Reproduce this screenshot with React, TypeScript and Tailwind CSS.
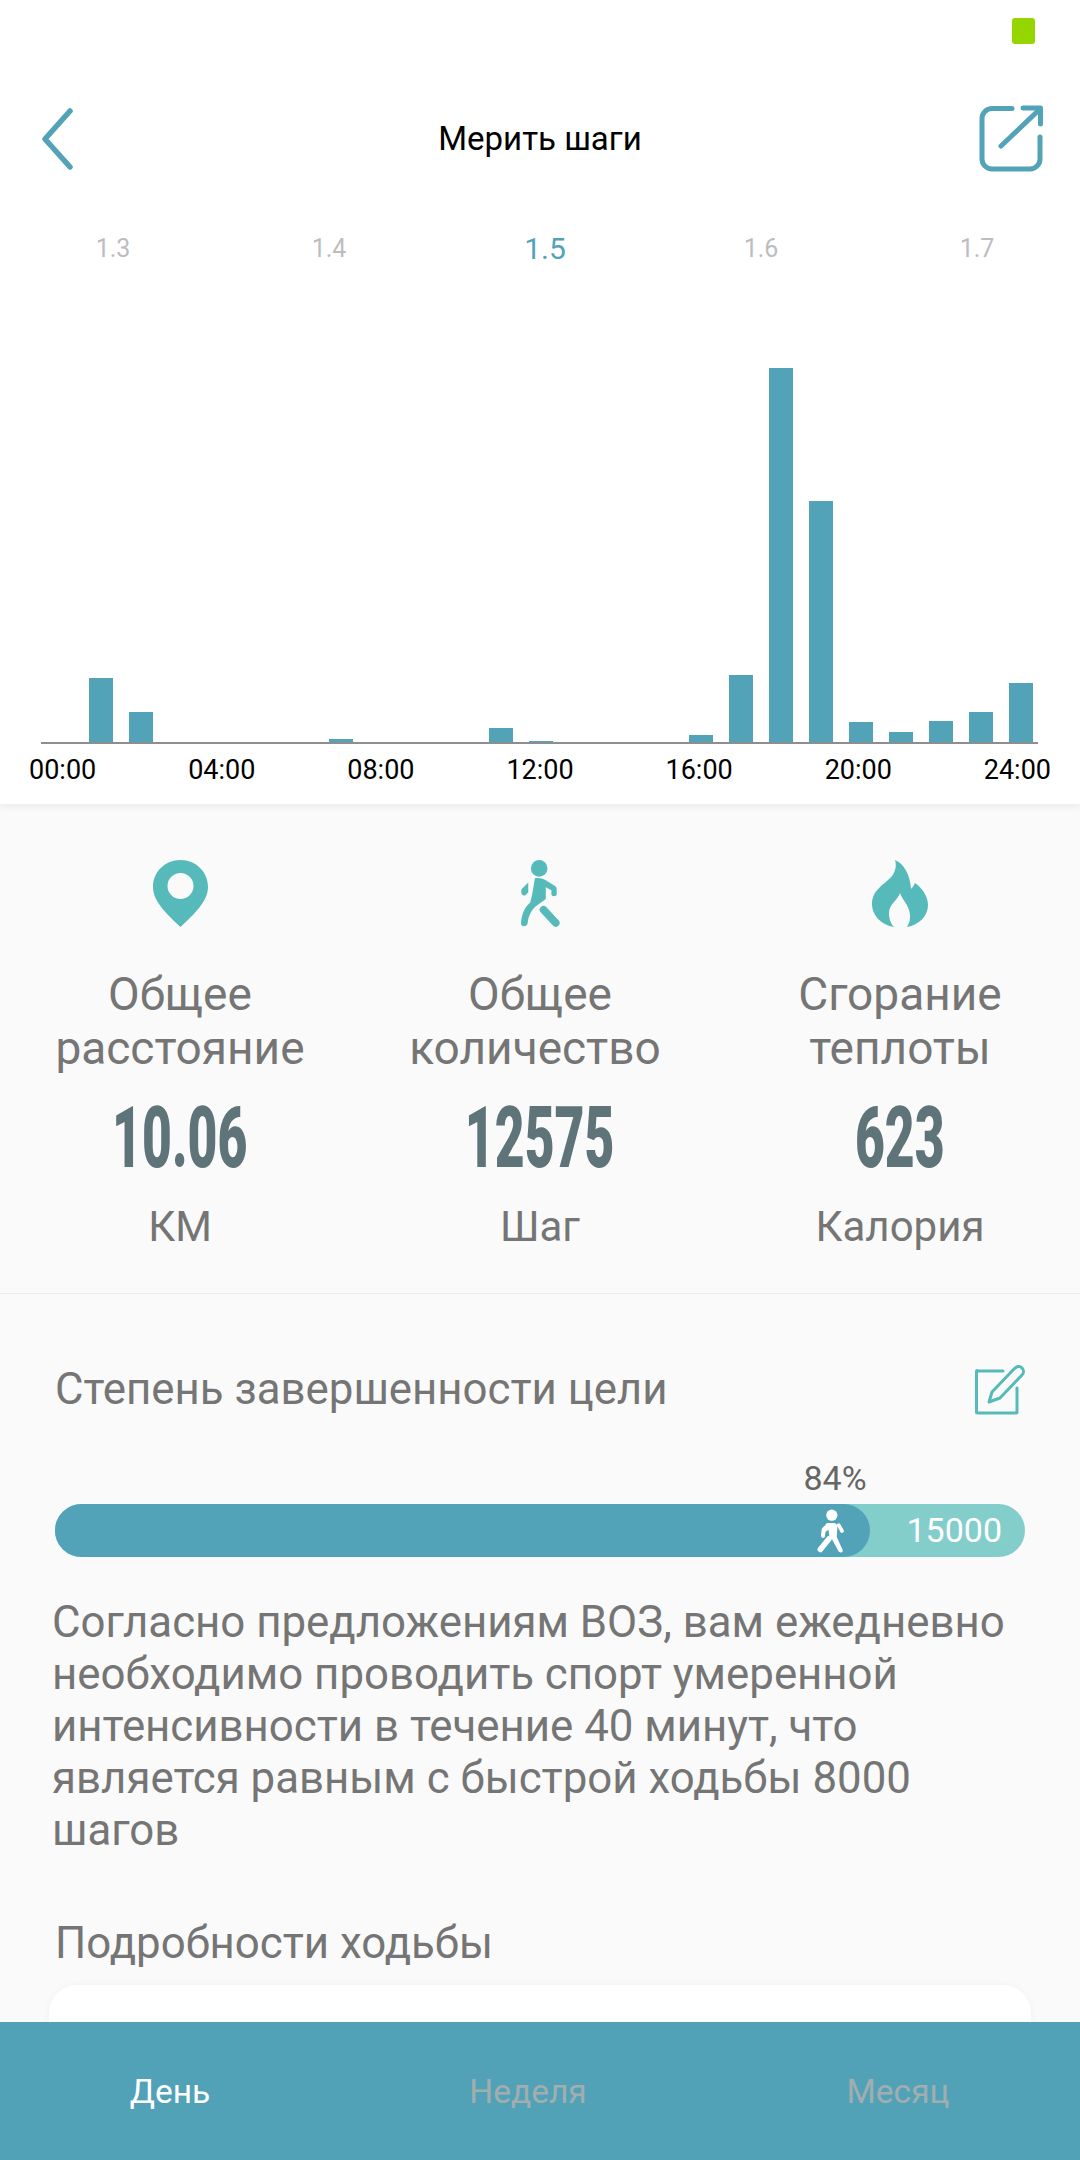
const hours = [64, 30, 0, 0, 0, 0, 3, 0, 0, 0, 14, 1, 0, 0, 0, 7, 67, 374, 241, 20, 10, 21, 30, 59];
const times = ["00:00", "04:00", "08:00", "12:00", "16:00", "20:00", "24:00"];

function PinIcon() {
  return (
    <svg viewBox="0 0 55 67" className="w-[55px] h-[67px]">
      <path
        fill="#55bab9"
        fillRule="evenodd"
        d="M27.5 0C12 0 0 12 0 27c0 15 15 28 27.5 40C40 55 55 42 55 27 55 12 43 0 27.5 0ZM27.500 13a13 13 0 1 1 0 26 13 13 0 0 1 0-26Z"
      />
    </svg>
  );
}

function WalkIcon() {
  return (
    <svg viewBox="0 0 118 202" className="w-[39px] h-[67px]">
      <circle cx="55" cy="25" r="25" fill="#55bab9" />
      <path
        fill="#55bab9"
        d="M42 55C52 53 65 55 75 61L103 78C107 81 108 84 108 88V103C108 111 92 111 92 103V91L75 82V118L42 142C30 155 22 170 20 192 18 203 0 203 0 192 1 165 12 140 28 128 34 108 38 80 42 55Z"
      />
      <path fill="#55bab9" d="M22 68 3 87C-1 92 0 104 8 107 12 108 15 105 22 97Z" />
      <path d="M68 150 105 190" fill="none" stroke="#55bab9" strokeWidth="23" strokeLinecap="round" />
    </svg>
  );
}

function FlameIcon() {
  return (
    <svg viewBox="0 0 56 67" className="w-[56px] h-[67px]">
      <path
        fill="#55bab9"
        d="M23 0C32 4 38 14 39 29 41 27 42 25 43 23 50 28 56 36 56 45 56 56 47 65 35 67 38 62 39 57 37 50 35 43 30 39 28 33 26 40 17 44 17 53 17 59 19 64 22 67 9 65 0 55 0 44 0 30 12 25 20 16 23 12 25 6 23 0Z"
      />
    </svg>
  );
}

function SmallWalker() {
  return (
    <svg viewBox="0 0 82 132" className="w-[27px] h-[44px]">
      <circle cx="45" cy="18" r="17" fill="#fff" />
      <path d="M30 42h20c8 0 12 5 12 12l-2 30 18 40c2 8-10 10-13 3L46 92l-8-6-3-24-9 6-2 14c-1 8-12 6-12-2l2-18c0-4 14-16 16-20Z" fill="#fff" />
      <path d="M36 90 10 122" stroke="#fff" strokeWidth="17" strokeLinecap="round" fill="none" />
      <path d="M66 48l10 18" stroke="#fff" strokeWidth="11" strokeLinecap="round" fill="none" />
    </svg>
  );
}

type StatProps = { icon: React.ReactNode; top: string; bottom: string; bottomClass?: string; value: string; unit: string };

function Stat({ icon, top, bottom, bottomClass, value, unit }: StatProps) {
  return (
    <div className="flex flex-col items-center">
      <div className="h-[67px] flex items-center">{icon}</div>
      <div className="mt-[40px] text-center text-[46px] leading-[54px] text-[#757575]">
        <div className="whitespace-nowrap">{top}</div>
        <div className={bottomClass}>{bottom}</div>
      </div>
      <div className="mt-[22px] h-[82px] flex items-center justify-center">
        <span className="inline-block scale-x-[0.6] text-[86px] leading-[82px] font-black text-[#5f7479]">{value}</span>
      </div>
      <div className="mt-[20px] text-[42px] leading-[55px] text-[#757575]">{unit}</div>
    </div>
  );
}

export default function App() {
  return (
    <div className="w-[1080px] h-[2160px] flex flex-col overflow-hidden bg-[#fafafa] font-['Roboto',sans-serif]">
      <div className="flex-1 overflow-hidden">
        <section className="relative h-[804px] bg-white shadow-[0_2px_8px_rgba(0,0,0,0.08)]">
          <div className="h-[105px] flex justify-end pt-[18px] pr-[45px]">
            <div className="w-[23px] h-[26px] rounded-[3px] bg-[#96d600]" />
          </div>

          <div className="h-[68px] grid grid-cols-[1fr_auto_1fr] items-center px-[40px]">
            <svg viewBox="0 0 34 62" className="w-[34px] h-[62px]">
              <path d="M30 3 5 31l25 28" fill="none" stroke="#52a3b7" strokeWidth="5.5" strokeLinecap="round" strokeLinejoin="round" />
            </svg>
            <h1 className="text-[33px] leading-[40px] text-black">Мерить шаги</h1>
            <svg viewBox="0 0 64 68" className="w-[64px] h-[68px] justify-self-end -mr-[3px]">
              <path d="M33 3.500H13a10 10 0 0 0-10 10V54a10 10 0 0 0 10 10H51a10 10 0 0 0 10-10V32" fill="none" stroke="#52a3b7" strokeWidth="5" strokeLinecap="round" />
              <path d="M22 41 61 4M44 3h17.500v16" fill="none" stroke="#52a3b7" strokeWidth="5" strokeLinecap="round" strokeLinejoin="round" />
            </svg>
          </div>

          <div className="mt-[53px] pl-[5px] h-[44px] grid grid-cols-[repeat(5,216px)] items-center text-center text-[25px] text-[#bdbdbd]">
            <span>1.3</span>
            <span>1.4</span>
            <span className="text-[30px] text-[#52a3b7]">1.5</span>
            <span>1.6</span>
            <span>1.7</span>
          </div>

          <div className="ml-[41px] w-[997px] h-[474px] pl-[40px] flex items-end border-b-2 border-[#8e8e8e]">
            {hours.map((h, i) => (
              <div key={i} className="w-[40px] shrink-0 flex justify-center">
                <div className="w-[24px] bg-[#52a3b7]" style={{ height: h }} />
              </div>
            ))}
          </div>

          <div className="h-[52px] px-[29px] flex items-center justify-between text-[27px] text-black">
            {times.map((t) => (
              <span key={t}>{t}</span>
            ))}
          </div>
        </section>

        <section className="h-[490px] pt-[56px] grid grid-cols-3 border-b border-[#ebebeb]">
          <Stat icon={<PinIcon />} top="Общее" bottom="расстояние" value="10.06" unit="КМ" />
          <Stat icon={<WalkIcon />} top="Общее" bottom="количество" bottomClass="-translate-x-[5px]" value="12575" unit="Шаг" />
          <Stat icon={<FlameIcon />} top="Сгорание" bottom="теплоты" value="623" unit="Калория" />
        </section>

        <section className="pt-[68px]">
          <div className="h-[56px] pl-[55px] pr-[55px] flex items-center justify-between">
            <h2 className="text-[43.8px] text-[#757575]">Степень завершенности цели</h2>
            <svg viewBox="0 0 50 50" className="w-[50px] h-[50px]">
              <path d="M28 6H3a1 1 0 0 0-1.500 1.500V47a1 1 0 0 0 1 1H41a1 1 0 0 0 1-1V23" fill="none" stroke="#55bab9" strokeWidth="3" strokeLinecap="round" />
              <path d="M17 27 39 4c3-3 6-3 8-1s2 5 0 7L25 33l-11 4Z" fill="none" stroke="#55bab9" strokeWidth="3" strokeLinejoin="round" />
            </svg>
          </div>

          <div className="mt-[40px] h-[40px] w-[835px] flex items-center justify-end text-[34px] text-[#666666]">
            <span className="translate-x-1/2">84%</span>
          </div>

          <div className="mt-[6px] ml-[55px] w-[970px] h-[53px] relative rounded-full bg-[#83cdcb] flex items-center justify-end pr-[23px] text-[34px] text-white">
            15000
            <div className="absolute left-0 top-0 h-full w-[84%] rounded-full bg-[#52a3b7] flex items-center justify-end pr-[26px]">
              <SmallWalker />
            </div>
          </div>

          <p className="mt-[39px] pl-[52px] w-[1040px] text-[43.8px] leading-[52px] text-[#757575]">
            Согласно предложениям ВОЗ, вам ежедневно необходимо проводить спорт умеренной интенсивности в течение 40 минут, что является равным с быстрой ходьбы 8000 шагов
          </p>

          <h2 className="mt-[59px] pl-[55px] text-[43.8px] leading-[56px] text-[#757575]">Подробности ходьбы</h2>

          <div className="mt-[14px] mx-[49px] h-[200px] rounded-t-[28px] bg-white shadow-[0_0_8px_rgba(0,0,0,0.04)]" />
        </section>
      </div>

      <nav className="h-[138px] shrink-0 pt-[2px] bg-[#52a2b7] grid grid-cols-3 items-center text-[33.5px] text-center">
        <span className="text-white -translate-x-[10px]">День</span>
        <span className="text-[#a2adb0] -translate-x-[12px]">Неделя</span>
        <span className="text-[#a2adb0] -translate-x-[2px]">Месяц</span>
      </nav>
    </div>
  );
}
